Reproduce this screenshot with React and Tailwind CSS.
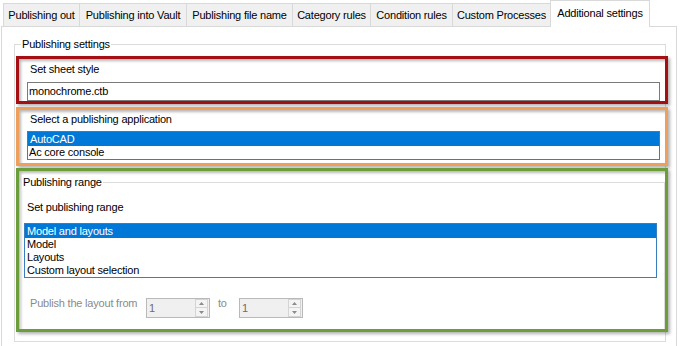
const tabs = [
  { label: 'Publishing out', w: 'w-[76px]' },
  { label: 'Publishing into Vault', w: 'w-[107px]' },
  { label: 'Publishing file name', w: 'w-[106px]' },
  { label: 'Category rules', w: 'w-[78px]' },
  { label: 'Condition rules', w: 'w-[82px]' },
  { label: 'Custom Processes', w: 'w-[98px]' },
]

const mark = 'shadow-[2px_2px_3px_rgba(0,0,0,0.3),inset_2px_2px_3px_rgba(0,0,0,0.28)]'

function Spinner() {
  return (
    <div className="flex w-[64px] h-[20px] border border-[#b9b9b9] bg-[#f0f0f0]">
      <span className="flex-1 pl-[2px] leading-[18px] text-[#6d6d6d]">1</span>
      <div className="flex flex-col w-[13px] mr-px">
        <div className="flex h-[9px] items-center justify-center border border-[#d4d4d4] bg-[#f4f4f4]">
          <svg width="5" height="3" viewBox="0 0 5 3"><path d="M0 3 L2.5 0 L5 3 Z" fill="#8a8a8a" /></svg>
        </div>
        <div className="flex h-[9px] items-center justify-center border border-t-0 border-[#d4d4d4] bg-[#f4f4f4]">
          <svg width="5" height="3" viewBox="0 0 5 3"><path d="M0 0 L5 0 L2.5 3 Z" fill="#8a8a8a" /></svg>
        </div>
      </div>
    </div>
  )
}

export default function App() {
  return (
    <div className="w-[680px] h-[346px] overflow-hidden bg-white text-[11px] tracking-[-0.2px] text-black font-['Liberation_Sans',Arial,sans-serif]">
      {/* Tab strip */}
      <div className="flex h-[26px] items-end pl-[3px]">
        {tabs.map(t => (
          <div
            key={t.label}
            className={`${t.w} h-[23px] flex items-center justify-center border-l border-t border-[#d9d9d9] bg-[#f0f0f0] whitespace-nowrap`}
          >
            {t.label}
          </div>
        ))}
        <div className="relative z-10 w-[100px] h-[27px] -mb-px flex justify-center pt-[5px] leading-[14px] border-l border-t border-r border-[#d9d9d9] bg-white whitespace-nowrap">
          Additional settings
        </div>
      </div>

      {/* Tab page */}
      <div className="ml-px w-[676px] h-[320px] border-l border-t border-r border-[#d9d9d9] pl-[12px] pt-[17px]">
        <div className="relative w-[652px] h-[298px] border border-[#dcdcdc] pl-px pt-[11px] flex flex-col">
          <span className="absolute left-[6px] top-[-8px] bg-white px-px leading-[14px]">Publishing settings</span>

          {/* Sheet style */}
          <div className={`w-[652px] h-[48px] border-[3px] border-[#a30f12] pl-[8px] pt-[3px] ${mark}`}>
            <div className="ml-[3px] h-[14px] leading-[14px]">Set sheet style</div>
            <div className="mt-[6px] w-[633px] h-[19px] border border-[#7a7a7a] bg-white pl-px leading-[17px]">monochrome.ctb</div>
          </div>

          {/* Publishing application */}
          <div className={`mt-[3px] w-[652px] h-[59px] border-[3px] border-[#ef9f5c] pl-[8px] pt-[2px] ${mark}`}>
            <div className="ml-[3px] h-[14px] leading-[14px]">Select a publishing application</div>
            <div className="mt-[5px] w-[633px] border border-[#3a7ebf] bg-white">
              <div className="h-[14px] leading-[14px] pl-[2px] bg-[#0078d7] text-white">AutoCAD</div>
              <div className="h-[13px] leading-[13px] pl-px">Ac core console</div>
            </div>
          </div>

          {/* Publishing range */}
          <div className={`mt-[2px] w-[652px] h-[164px] border-[3px] border-[#6b9e3b] ${mark}`}>
            <div className="relative mt-[11px] ml-px w-[645px] h-[147px] border-l border-t border-r border-[#dcdcdc] flex flex-col">
              <span className="absolute left-px top-[-8px] bg-white px-px leading-[14px]">Publishing range</span>
              <div className="ml-[6px] mt-[17px] h-[14px] leading-[14px]">Set publishing range</div>
              <div className="ml-[3px] mt-[9px] w-[633px] border border-[#3a7ebf] bg-white">
                <div className="h-[14px] leading-[14px] pl-[2px] bg-[#0078d7] text-white">Model and layouts</div>
                <div className="h-[13px] leading-[13px] pl-[2px]">Model</div>
                <div className="h-[13px] leading-[13px] pl-[2px]">Layouts</div>
                <div className="h-[13px] leading-[13px] pl-[2px]">Custom layout selection</div>
              </div>
              <div className="ml-[9px] mt-[20px] flex items-start text-[#8a8a8a]">
                <span className="w-[116px] -mt-[2px] leading-[14px] whitespace-nowrap">Publish the layout from</span>
                <Spinner />
                <span className="w-[29px] pl-[8px] -mt-[2px] leading-[14px]">to</span>
                <Spinner />
              </div>
            </div>
          </div>
        </div>
      </div>
    </div>
  )
}
